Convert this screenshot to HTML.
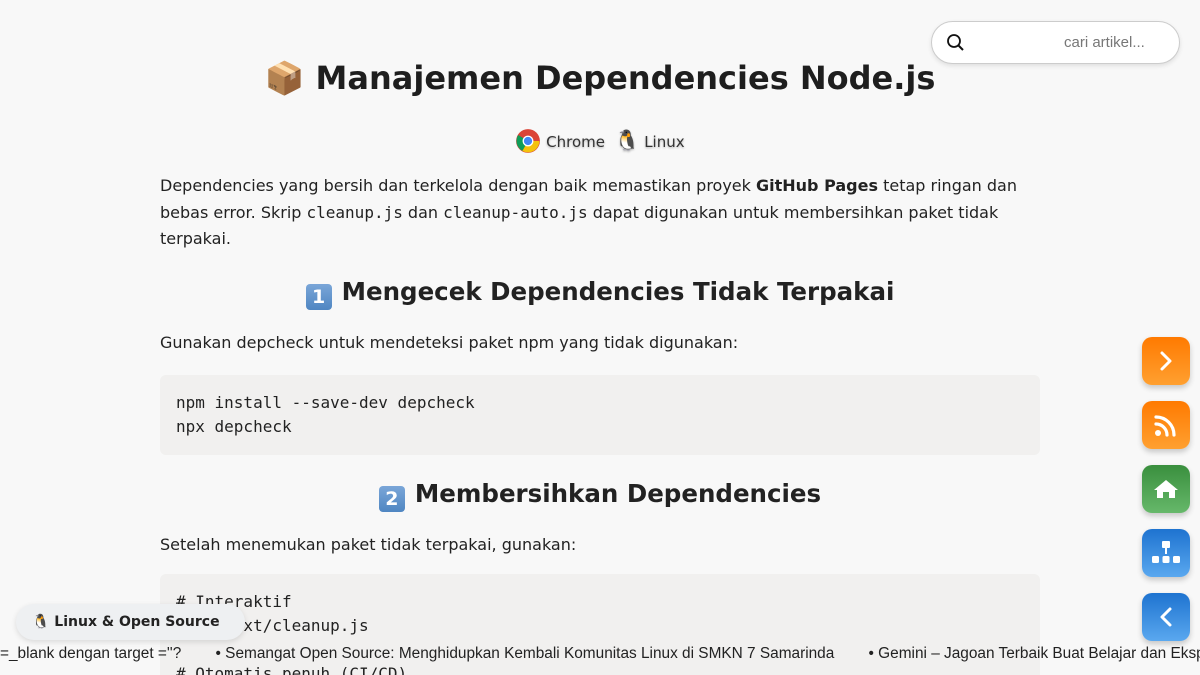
<!DOCTYPE html>
<html><head><meta charset="utf-8"><style>
html,body{margin:0;width:1200px;height:675px;overflow:hidden}
body{background:#f8f8f8;font-family:"DejaVu Sans","Liberation Sans",sans-serif;color:#222;position:relative}
.wrap{position:absolute;left:160px;width:880px;top:0;height:675px;overflow:hidden}
h1{position:absolute;top:56px;left:0;width:880px;margin:0;text-align:center;font-size:32px;font-weight:bold;line-height:44px;color:#1e1e1e}
.badges{position:absolute;top:128px;left:0;width:880px;text-align:center;font-size:15px;color:#333;text-shadow:0 1px 2px rgba(0,0,0,.3)}
p{position:absolute;left:0;margin:0;font-size:16px;line-height:26.5px;width:880px}
code{font-family:"DejaVu Sans Mono",monospace;font-size:16px}
h2{position:absolute;left:0;width:880px;margin:0;text-align:center;font-size:24.5px;font-weight:bold;line-height:36px}
pre{position:absolute;left:0;width:848px;margin:0;background:#f1f0ef;border-radius:6px 6px 0 0;padding:16px 16px 0;font-family:"DejaVu Sans Mono",monospace;font-size:16px;line-height:24px;color:#222;overflow:hidden}
.num{display:inline-block;width:26px;height:26px;background:linear-gradient(#7aa6d8,#4f86c2);color:#fff;border-radius:4px;font-size:19px;line-height:26px;text-align:center;vertical-align:-3px;margin-right:10px}
.search{position:absolute;left:931px;top:21px;width:247px;height:41px;background:#fff;border:1px solid #ccc;border-radius:22px;box-shadow:0 2px 5px rgba(0,0,0,.1)}
.search span{position:absolute;left:132px;top:12px;font-family:"Liberation Sans",sans-serif;font-size:15px;color:#777}
.btn{position:absolute;left:1142px;width:48px;height:48px;border-radius:10px;box-shadow:0 3px 6px rgba(0,0,0,.2);display:flex;align-items:center;justify-content:center}
.or{background:linear-gradient(#ff7a00,#ffa030)}.gr{background:linear-gradient(#3a8f3e,#66b86a)}.bl{background:linear-gradient(#1e73d0,#5aa8ef)}
.pill{position:absolute;left:16px;top:604px;width:229px;height:36px;background:#eef0f2;border-radius:18px;box-shadow:0 2px 6px rgba(0,0,0,.12);font-size:14px;font-weight:bold;line-height:36px;padding-left:16px;box-sizing:border-box}
.ticker{position:absolute;left:0;top:645px;white-space:nowrap;font-family:"Liberation Sans",sans-serif;font-size:15.4px;color:#222;overflow:hidden;width:1200px}
</style></head><body>
<div class="wrap">
<h1>📦 Manajemen Dependencies Node.js</h1>
<div class="badges"><svg width="26" height="26" viewBox="0 0 24 24" style="vertical-align:-7px"><circle cx="12" cy="12" r="11" fill="#db4437"/><path d="M12 12 L22.5 12 A10.5 10.5 0 0 1 6.8 21.1Z" fill="#f4c20d"/><path d="M12 12 L6.8 21.1 A10.5 10.5 0 0 1 2.9 6.5Z" fill="#0f9d58"/><circle cx="12" cy="12" r="5" fill="#fff"/><circle cx="12" cy="12" r="3.8" fill="#4285f4"/></svg> Chrome &nbsp;<span style="font-size:20px">🐧</span> Linux</div>
<p style="top:173px">Dependencies yang bersih dan terkelola dengan baik memastikan proyek <b>GitHub Pages</b> tetap ringan dan bebas error. Skrip <code>cleanup.js</code> dan <code>cleanup-auto.js</code> dapat digunakan untuk membersihkan paket tidak terpakai.</p>
<h2 style="top:274px"><span class="num">1</span>Mengecek Dependencies Tidak Terpakai</h2>
<p style="top:330px">Gunakan depcheck untuk mendeteksi paket npm yang tidak digunakan:</p>
<pre style="top:375px;height:64px;border-radius:6px">npm install --save-dev depcheck
npx depcheck</pre>
<h2 style="top:476px"><span class="num">2</span>Membersihkan Dependencies</h2>
<p style="top:532px">Setelah menemukan paket tidak terpakai, gunakan:</p>
<pre style="top:574px;height:85px"># Interaktif
node next/cleanup.js

# Otomatis penuh (CI/CD)</pre>
</div>
<div class="search"><svg width="20" height="20" viewBox="0 0 20 20" style="position:absolute;left:14px;top:11px"><circle cx="8" cy="8" r="6" fill="none" stroke="#111" stroke-width="1.8"/><path d="M12.5 12.5 L17 17" stroke="#111" stroke-width="2"/></svg><span>cari artikel...</span></div>
<div class="btn or" style="top:337px"><svg width="24" height="24" viewBox="0 0 24 24"><path d="M8 4 L16 12 L8 20" fill="none" stroke="#fff" stroke-width="3" stroke-linecap="round" stroke-linejoin="round"/></svg></div>
<div class="btn or" style="top:401px"><svg width="26" height="26" viewBox="0 0 26 26"><circle cx="5" cy="21" r="3" fill="#fff"/><path d="M3 12 A11 11 0 0 1 14 23 M3 5 A18 18 0 0 1 21 23" fill="none" stroke="#fff" stroke-width="3.2" stroke-linecap="round"/></svg></div>
<div class="btn gr" style="top:465px"><svg width="26" height="24" viewBox="0 0 26 24"><path d="M13 3 L25 13 L22 13 L22 21 L16 21 L16 15 L10 15 L10 21 L4 21 L4 13 L1 13Z" fill="#fff"/></svg></div>
<div class="btn bl" style="top:529px"><svg width="30" height="28" viewBox="0 0 30 28"><rect x="11" y="2" width="8" height="7" rx="1" fill="#fff"/><path d="M15 9 V15" stroke="#fff" stroke-width="2"/><rect x="1" y="17" width="7" height="7" rx="1.5" fill="#fff"/><rect x="11.5" y="17" width="7" height="7" rx="1.5" fill="#fff"/><rect x="22" y="17" width="7" height="7" rx="1.5" fill="#fff"/></svg></div>
<div class="btn bl" style="top:593px"><svg width="24" height="24" viewBox="0 0 24 24"><path d="M16 4 L8 12 L16 20" fill="none" stroke="#fff" stroke-width="3" stroke-linecap="round" stroke-linejoin="round"/></svg></div>
<div class="pill">🐧 Linux &amp; Open Source</div>
<div class="ticker">=_blank dengan target =''?&nbsp;&nbsp;&nbsp;&nbsp;&nbsp;&nbsp;&nbsp;&nbsp;• Semangat Open Source: Menghidupkan Kembali Komunitas Linux di SMKN 7 Samarinda&nbsp;&nbsp;&nbsp;&nbsp;&nbsp;&nbsp;&nbsp;&nbsp;• Gemini – Jagoan Terbaik Buat Belajar dan Eksplorasi</div>
</body></html>
